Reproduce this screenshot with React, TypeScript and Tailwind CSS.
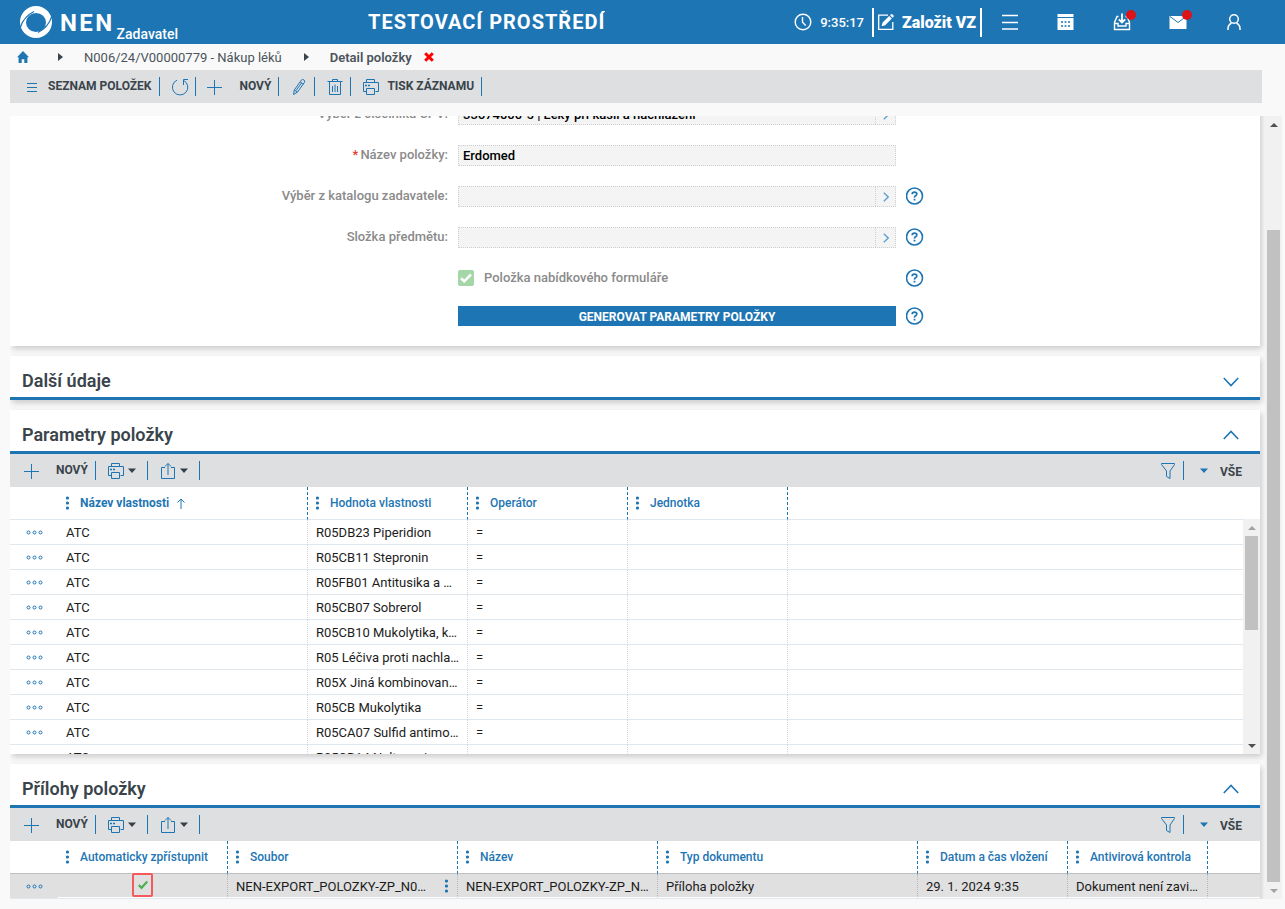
import React, { ReactNode } from "react";

type IconProps = { className?: string };

const stroke = {
  fill: "none",
  stroke: "currentColor",
  strokeWidth: 1,
} as const;

function LogoMark() {
  return (
    <svg viewBox="0 0 32 32" className="size-8 shrink-0" aria-hidden="true">
      <path d="M16 0a16 16 0 1 1 0 32a16 16 0 1 1 0-32zM16 7a10 9.500 0 1 0 0 19a10 9.500 0 1 0 0-19z" fill="#fff" fillRule="evenodd" />
      <path d="M0 22.500Q3 11 14 5.500" fill="none" stroke="#1e75b4" strokeWidth="1.200" />
      <path d="M32 9.500Q29 21 18 26.500" fill="none" stroke="#1e75b4" strokeWidth="1.200" />
    </svg>
  );
}

function ClockIcon() {
  return (
    <svg viewBox="0 0 18 18" className="size-[18px] shrink-0" {...stroke} strokeWidth={1.4} aria-hidden="true">
      <circle cx="9" cy="9" r="7.8" />
      <path d="M8.5 4v5.3l3.2 3.2" />
    </svg>
  );
}

function EditBoxIcon() {
  return (
    <svg viewBox="0 0 18 18" className="size-[18px] shrink-0" aria-hidden="true">
      <path d="M11 2.2H1.7v14.1h14.1V9" fill="none" stroke="currentColor" strokeWidth="1.3" />
      <path d="M4.6 13.2l1-3.6 6.6-6.6 2.6 2.6-6.6 6.6zM13 2.2l1-1q.6-.5 1.2 0l1.400 1.400q.5.6 0 1.200l-1 1z" fill="currentColor" />
    </svg>
  );
}

function MenuIcon() {
  return (
    <svg viewBox="0 0 18 18" className="size-[18px]" {...stroke} strokeWidth={1.7} aria-hidden="true">
      <path d="M1 2.500h16M1 9.500h16M1 16h16" />
    </svg>
  );
}

function CalendarIcon() {
  return (
    <svg viewBox="0 0 18 18" className="size-[18px]" aria-hidden="true">
      <path d="M.5 1h16v3H.5zM.5 5h16v12H.5z" fill="currentColor" />
      <path d="M4 9h2M7.500 9h2M11 9h2M4 13h2M7.500 13h2M11 13h2" stroke="#1e75b4" strokeWidth="1.500" />
    </svg>
  );
}

function InboxIcon() {
  return (
    <svg viewBox="0 0 18 18" className="size-[18px]" {...stroke} strokeWidth={1.4} aria-hidden="true">
      <path d="M5.500 3.500H4L1.500 9.500v7h15v-7L14 3.500h-1.500M1.500 10.500h3.500v2.500h8v-2.500h3.500" />
      <path d="M9 .5v9M5.800 6.300L9 9.500l3.200-3.200" strokeWidth="1.800" />
    </svg>
  );
}

function MailIcon() {
  return (
    <svg viewBox="0 0 18 18" className="size-[18px]" aria-hidden="true">
      <path d="M.5 3h17v13H.5z" fill="currentColor" />
      <path d="M1 3.500l8 6 8-6" fill="none" stroke="#1e75b4" strokeWidth="1" />
    </svg>
  );
}

function UserIcon() {
  return (
    <svg viewBox="0 0 18 18" className="size-[18px]" {...stroke} strokeWidth={1.500} aria-hidden="true">
      <circle cx="9" cy="6" r="4.300" />
      <path d="M3 17v-1.500q0-3.500 3.500-5.500M15 17v-1.500q0-3.500-3.500-5.500" />
    </svg>
  );
}

function HomeIcon() {
  return (
    <svg viewBox="0 0 12 12" className="size-3" aria-hidden="true">
      <path d="M6 0l6 6.200h-1.600V12H7.300V8.300H4.700V12H1.600V6.200H0z" fill="#1e75b4" />
    </svg>
  );
}

function CrossIcon() {
  return (
    <svg viewBox="0 0 10 10" className="size-[10px]" aria-hidden="true">
      <path d="M1.200 1.200l7.600 7.600M8.800 1.200L1.200 8.800" stroke="#f00" strokeWidth="3" />
    </svg>
  );
}

function ListIcon() {
  return (
    <svg viewBox="0 0 12 12" className="size-3" {...stroke} aria-hidden="true">
      <path d="M1 2.500h10M1 6.500h10M1 10.500h10" />
    </svg>
  );
}

function RefreshIcon() {
  return (
    <svg viewBox="0 0 18 18" className="size-[18px]" {...stroke} aria-hidden="true">
      <path d="M6 2.200A7.700 7.700 0 1 0 12.800 2.500M12.500 7V1.500H17" />
    </svg>
  );
}

function PlusIcon() {
  return (
    <svg viewBox="0 0 16 16" className="size-4" {...stroke} aria-hidden="true">
      <path d="M8.500 1v15M1 8.500h15" />
    </svg>
  );
}

function PencilIcon() {
  return (
    <svg viewBox="0 0 16 18" className="h-[18px] w-4" {...stroke} aria-hidden="true">
      <path d="M2.500 16.500l.8-4.500 7-9.800q1-1.300 2.500-.4 1.500 1.200.6 2.700l-7 9.700zM3.300 12l3.100 2.200M9.300 4l3 2.200M5 12.500L10.800 4.700" />
    </svg>
  );
}

function TrashIcon() {
  return (
    <svg viewBox="0 0 16 18" className="h-[18px] w-4" {...stroke} aria-hidden="true">
      <path d="M.5 3.500h15M5.500 3.500v-2h5v2M2.500 3.500v13h11v-13M5.500 8v6M8 6.500V14M10.500 8v6" />
    </svg>
  );
}

function PrinterIcon() {
  return (
    <svg viewBox="0 0 18 18" className="size-[18px]" {...stroke} aria-hidden="true">
      <path d="M4.500 4.500v-3h8v3M4.500 13.500h-3v-9h15v9h-3M4.500 10.500h8v6h-8z" />
      <path d="M3 7.500h2M6 7.500h2" strokeWidth="1.600" />
    </svg>
  );
}

function ShareIcon() {
  return (
    <svg viewBox="0 0 16 18" className="h-[18px] w-4" {...stroke} aria-hidden="true">
      <path d="M5 5.500H1.500v11h13v-11H11M8 13V1.500M5 4.500l3-3 3 3" />
    </svg>
  );
}

function FilterIcon() {
  return (
    <svg viewBox="0 0 16 18" className="h-[18px] w-4" {...stroke} aria-hidden="true">
      <path d="M1.500 1.500h13v1L10 9v7.500L6.500 14.500V9l-5-6.500z" />
    </svg>
  );
}

function CaretIcon({ className }: IconProps) {
  return (
    <svg viewBox="0 0 8 5" className={className ?? "h-[5px] w-2 text-[#343f47]"} aria-hidden="true">
      <path d="M0 .5h8L4 5z" fill="currentColor" />
    </svg>
  );
}

function CrumbArrow() {
  return (
    <svg viewBox="0 0 5 8" className="h-2 w-[5px] text-[#3a444b]" aria-hidden="true">
      <path d="M0 0v8l5-4z" fill="currentColor" />
    </svg>
  );
}

function ChevronIcon({ up }: { up?: boolean }) {
  return (
    <svg viewBox="0 0 16 12" className="h-3 w-4" {...stroke} strokeWidth={1.600} aria-hidden="true">
      <path d={up ? "M.8 10L8 2.500 15.200 10" : "M.8 3L8 10.500 15.200 3"} />
    </svg>
  );
}

function DotsVertical() {
  return (
    <svg viewBox="0 0 4 14" className="h-[14px] w-1 shrink-0" fill="#1e75b4" aria-hidden="true">
      <circle cx="1.500" cy="2" r="1.600" />
      <circle cx="1.500" cy="7" r="1.600" />
      <circle cx="1.500" cy="12" r="1.600" />
    </svg>
  );
}

function RowMenu() {
  return (
    <button type="button" aria-label="Akce řádku" className="ml-4 flex h-[23px] items-center text-[#1e75b4]">
      <svg viewBox="0 0 18 5" className="h-[5px] w-[18px]" {...stroke} aria-hidden="true">
        <circle cx="2.500" cy="2.500" r="1.500" />
        <circle cx="8.500" cy="2.500" r="1.500" />
        <circle cx="14.500" cy="2.500" r="1.500" />
      </svg>
    </button>
  );
}

function HelpButton({ topic }: { topic: string }) {
  return (
    <button type="button" aria-label={`Nápověda: ${topic}`} className="size-[18px] text-[#1e75b4]">
      <svg viewBox="0 0 18 18" className="size-[18px]" fill="none" stroke="currentColor" aria-hidden="true">
        <circle cx="8.500" cy="9" r="8" strokeWidth="1.600" />
        <path d="M6.200 7.200q0-2 2.300-2t2.300 1.800q0 1.200-1.200 1.700T8.500 10.600" strokeWidth="1.700" />
        <path d="M8.500 11.800v1.700" strokeWidth="1.800" />
      </svg>
    </button>
  );
}

function Separator() {
  return <span className="h-[19px] w-px shrink-0 bg-[#1e75b4]" />;
}

function Header() {
  const icons: { label: string; icon: ReactNode; badge?: boolean }[] = [
    { label: "Menu", icon: <MenuIcon /> },
    { label: "Kalendář", icon: <CalendarIcon /> },
    { label: "Úkoly", icon: <InboxIcon />, badge: true },
    { label: "Zprávy", icon: <MailIcon />, badge: true },
    { label: "Uživatel", icon: <UserIcon /> },
  ];
  return (
    <header className="flex h-11 shrink-0 items-center bg-[#1e75b4] pl-5 text-white">
      <div className="flex w-[348px] items-center">
        <LogoMark />
        <span className="mr-0.5 ml-2 pt-0.5 text-2xl leading-8 font-bold tracking-widest">NEN</span>
        <span className="self-end text-sm leading-[10px] font-medium">Zadavatel</span>
      </div>
      <h1 className="text-xl font-bold tracking-wider">TESTOVACÍ PROSTŘEDÍ</h1>
      <div className="ml-auto flex items-center">
        <ClockIcon />
        <span className="mr-2 ml-2 pt-0.5 text-[13px] font-medium">9:35:17</span>
        <button type="button" className="flex h-[29px] w-[110px] items-center gap-[7px] border-x-2 border-white pl-[3px] text-base font-black whitespace-nowrap">
          <EditBoxIcon />
          <span className="pt-0.5">Založit VZ</span>
        </button>
        <nav className="flex">
          {icons.map((i) => (
            <button key={i.label} type="button" aria-label={i.label} className="relative flex h-11 w-14 items-center justify-center">
              {i.icon}
              {i.badge && <span className="absolute top-2.5 right-3.5 size-2.5 rounded-full bg-[#dc1418]" />}
            </button>
          ))}
        </nav>
        <span className="w-[23px]" />
      </div>
    </header>
  );
}

function Breadcrumb() {
  return (
    <nav aria-label="Drobečková navigace" className="flex h-[26px] shrink-0 items-center pl-[17px] text-[13px] text-[#4b545b]">
      <a href="#home" aria-label="Domů">
        <HomeIcon />
      </a>
      <span className="ml-[29px]">
        <CrumbArrow />
      </span>
      <a href="#zakazka" className="mr-[22px] ml-[21px] pt-0.5">
        N006/24/V00000779 - Nákup léků
      </a>
      <CrumbArrow />
      <span className="ml-[21px] pt-0.5 font-semibold">Detail položky</span>
      <button type="button" aria-label="Zavřít" className="ml-3">
        <CrossIcon />
      </button>
    </nav>
  );
}

function Toolbar() {
  const button = "flex items-center whitespace-nowrap text-[#1e75b4]";
  const label = "pb-0.5 text-xs font-bold text-[#3a444b]";
  return (
    <div role="toolbar" className="mr-[23px] ml-2.5 flex h-[33px] shrink-0 items-center bg-[#dedfe1] pl-4">
      <button type="button" className={`${button} mr-2 gap-2.5`}>
        <ListIcon />
        <span className={label}>SEZNAM POLOŽEK</span>
      </button>
      <Separator />
      <button type="button" aria-label="Obnovit" className={`${button} mr-1.5 ml-[11px]`}>
        <RefreshIcon />
      </button>
      <Separator />
      <button type="button" className={`${button} mr-[7px] ml-2.5 gap-[17px]`}>
        <PlusIcon />
        <span className={label}>NOVÝ</span>
      </button>
      <Separator />
      <button type="button" aria-label="Upravit" className={`${button} mr-[7px] ml-3`}>
        <PencilIcon />
      </button>
      <Separator />
      <button type="button" aria-label="Smazat" className={`${button} mr-[7px] ml-3`}>
        <TrashIcon />
      </button>
      <Separator />
      <button type="button" className={`${button} mr-[7px] ml-[11px] gap-[7px]`}>
        <PrinterIcon />
        <span className={label}>TISK ZÁZNAMU</span>
      </button>
      <Separator />
    </div>
  );
}

const formGrid = "grid grid-cols-[minmax(0,73fr)_minmax(0,73fr)_minmax(0,59fr)] items-center gap-x-2.5";

function FormRow({ id, label, value, required, lookup, help }: { id: string; label: string; value?: string; required?: boolean; lookup?: boolean; help?: boolean }) {
  return (
    <div className={`${formGrid} mb-5 h-[21px]`}>
      <label htmlFor={id} className="pb-0.5 text-right font-medium text-[#8a8a8a]">
        {required && <span className="mr-0.5 text-[#e53935]">*</span>}
        {label}:
      </label>
      <div className="flex h-[21px] border border-dotted border-[#cfcfcf] bg-[#f4f4f4]">
        <input id={id} type="text" readOnly defaultValue={value} className="min-w-0 flex-1 bg-transparent px-1 font-medium text-black outline-none" />
        {lookup && (
          <button type="button" aria-label={`Vybrat: ${label}`} className="flex w-5 items-center justify-center border-l border-dotted border-[#cfcfcf] text-[#5b9fd0]">
            <svg viewBox="0 0 6 10" className="h-[10px] w-[6px]" {...stroke} strokeWidth={1.300} aria-hidden="true">
              <path d="M.8 .8L5.200 5 .8 9.200" />
            </svg>
          </button>
        )}
      </div>
      {help && (
        <div className="flex pb-0.5">
          <HelpButton topic={label} />
        </div>
      )}
    </div>
  );
}

const card = "mb-2.5 mr-[5px] bg-white shadow-[2px_3px_6px_rgba(0,0,0,0.18)]";

function DetailForm() {
  return (
    <section className={`${card} -mt-3 pb-5 text-[13px]`}>
      <FormRow id="cpv" label="Výběr z číselníku CPV" value="33674000-5 | Léky při kašli a nachlazení" lookup />
      <FormRow id="nazev" label="Název položky" value="Erdomed" required />
      <FormRow id="katalog" label="Výběr z katalogu zadavatele" lookup help />
      <FormRow id="slozka" label="Složka předmětu" lookup help />
      <div className={`${formGrid} mb-5 h-[18px]`}>
        <span />
        <label className="flex items-center gap-2.5 font-medium text-[#8a8a8a]">
          <span className="grid size-4 place-items-center">
            <input type="checkbox" defaultChecked className="col-start-1 row-start-1 size-4 appearance-none rounded-xs bg-[#a5d6a7]" />
            <svg viewBox="0 0 16 16" className="pointer-events-none col-start-1 row-start-1 size-4" fill="none" stroke="#fff" strokeWidth="2.600" aria-hidden="true">
              <path d="M3 8.200l3.200 3.100L13 4.500" />
            </svg>
          </span>
          Položka nabídkového formuláře
        </label>
        <HelpButton topic="Položka nabídkového formuláře" />
      </div>
      <div className={`${formGrid} h-5`}>
        <span />
        <button type="button" className="h-5 bg-[#1e75b4] pt-px text-xs font-bold text-white">
          GENEROVAT PARAMETRY POLOŽKY
        </button>
        <HelpButton topic="Generovat parametry položky" />
      </div>
    </section>
  );
}

function SectionTitle({ title, open }: { title: string; open?: boolean }) {
  return (
    <div className="flex h-11 items-center justify-between border-b-3 border-[#1e75b4] pt-2 pr-[21px] pl-3">
      <h2 className="text-lg font-semibold text-[#3a444b]">{title}</h2>
      <button type="button" aria-label={`${open ? "Sbalit" : "Rozbalit"}: ${title}`} className="text-[#1e75b4]">
        <ChevronIcon up={open} />
      </button>
    </div>
  );
}

function GridToolbar() {
  return (
    <div role="toolbar" className="flex h-[33px] items-center bg-[#dedfe1] pl-[13px] text-xs font-bold text-[#3a444b]">
      <button type="button" className="mr-[7px] flex items-center gap-[17px]">
        <span className="text-[#1e75b4]">
          <PlusIcon />
        </span>
        <span className="pb-0.5">NOVÝ</span>
      </button>
      <Separator />
      <button type="button" aria-label="Tisk" className="mr-[11px] ml-[11px] flex items-center gap-[3px] text-[#1e75b4]">
        <PrinterIcon />
        <CaretIcon />
      </button>
      <Separator />
      <button type="button" aria-label="Export" className="mr-[11px] ml-3 flex items-center gap-1 text-[#1e75b4]">
        <ShareIcon />
        <CaretIcon />
      </button>
      <Separator />
      <button type="button" aria-label="Filtr" className="mr-[7px] ml-auto text-[#1e75b4]">
        <FilterIcon />
      </button>
      <Separator />
      <button type="button" className="mr-[18px] ml-4 flex items-center gap-3">
        <CaretIcon className="h-[5px] w-2 text-[#1e75b4]" />
        <span className="pt-0.5">VŠE</span>
      </button>
    </div>
  );
}

function HeadCell({ children }: { children: ReactNode }) {
  return (
    <th scope="col" className="border-r border-b border-r-[#1e75b4] border-b-[#e0e8ed] p-0 text-left [border-right-style:dashed]">
      <div className="flex h-8 items-center gap-2.5 pl-2 text-xs font-medium text-[#1e75b4]">
        <DotsVertical />
        {children}
      </div>
    </th>
  );
}

function CellText({ children }: { children: ReactNode }) {
  return <div className="truncate pt-0.5 pr-1 pl-2">{children}</div>;
}

function ScrollArrow({ down, muted }: { down?: boolean; muted?: boolean }) {
  return (
    <span className={`flex h-[17px] shrink-0 items-center justify-center ${muted ? "text-[#a3a3a3]" : "text-[#505050]"}`}>
      <svg viewBox="0 0 8 4" className="h-1 w-2" aria-hidden="true">
        <path d={down ? "M0 0h8L4 4z" : "M0 4h8L4 0z"} fill="currentColor" />
      </svg>
    </span>
  );
}

const parameters = [
  "R05DB23 Piperidion",
  "R05CB11 Stepronin",
  "R05FB01 Antitusika a mukolytika",
  "R05CB07 Sobrerol",
  "R05CB10 Mukolytika, kombinace",
  "R05 Léčiva proti nachlazení",
  "R05X Jiná kombinovaná léčiva",
  "R05CB Mukolytika",
  "R05CA07 Sulfid antimonitý",
  "R05CB14 Neltenexin",
];

function ParametersSection() {
  const cell = "border-r border-b border-r-[#d4d4d4] border-b-[#e0e8ed] p-0 [border-right-style:dotted]";
  return (
    <section className={card}>
      <SectionTitle title="Parametry položky" open />
      <GridToolbar />
      <div className="flex h-[267px] overflow-hidden">
        <div className="min-w-0 flex-1">
          <table className="w-full table-fixed border-separate border-spacing-0 text-[13px] text-[#1c1c1c]">
            <colgroup>
              <col className="w-12" />
              <col className="w-[250px]" />
              <col className="w-40" />
              <col className="w-40" />
              <col className="w-40" />
              <col />
            </colgroup>
            <thead>
              <tr>
                <th className="border-b border-[#e0e8ed] p-0" />
                <HeadCell>
                  <span className="flex items-center gap-2 font-bold">
                    Název vlastnosti
                    <svg viewBox="0 0 8 11" className="h-[11px] w-2" {...stroke} aria-hidden="true">
                      <path d="M4 11V1M.5 4.500L4 1l3.500 3.500" />
                    </svg>
                  </span>
                </HeadCell>
                <HeadCell>Hodnota vlastnosti</HeadCell>
                <HeadCell>Operátor</HeadCell>
                <HeadCell>Jednotka</HeadCell>
                <th className="border-b border-[#e0e8ed] p-0" />
              </tr>
            </thead>
            <tbody>
              {parameters.map((p) => (
                <tr key={p} className="h-[25px]">
                  <td className="border-b border-[#e0e8ed] p-0">
                    <RowMenu />
                  </td>
                  <td className={cell}>
                    <CellText>ATC</CellText>
                  </td>
                  <td className={cell}>
                    <div className="pr-1">
                      <CellText>{p}</CellText>
                    </div>
                  </td>
                  <td className={cell}>
                    <CellText>=</CellText>
                  </td>
                  <td className={cell} />
                  <td className="border-b border-[#e0e8ed] p-0" />
                </tr>
              ))}
            </tbody>
          </table>
        </div>
        <div className="flex w-[17px] flex-col pt-8">
          <div className="flex flex-1 flex-col bg-[#f1f1f1]">
            <ScrollArrow muted />
            <div className="flex-1 px-0.5">
              <div className="h-[47%] bg-[#c1c1c1]" />
            </div>
            <ScrollArrow down />
          </div>
        </div>
      </div>
    </section>
  );
}

function AttachmentsSection() {
  const cell = "border-r border-b border-r-[#b8b8b8] border-b-white p-0 [border-right-style:dotted]";
  return (
    <section className="mr-[5px] bg-white shadow-[2px_3px_6px_rgba(0,0,0,0.18)]">
      <SectionTitle title="Přílohy položky" open />
      <GridToolbar />
      <table className="w-full table-fixed border-separate border-spacing-0 border-b border-[#e0e8ed] text-[13px] text-[#1c1c1c]">
        <colgroup>
          <col className="w-12" />
          <col className="w-[170px]" />
          <col className="w-[230px]" />
          <col className="w-[200px]" />
          <col className="w-[260px]" />
          <col className="w-[150px]" />
          <col className="w-[140px]" />
          <col />
        </colgroup>
        <thead className="[&_th]:border-b-[#c0c0c0]">
          <tr>
            <th className="border-b p-0" />
            <HeadCell>Automaticky zpřístupnit</HeadCell>
            <HeadCell>Soubor</HeadCell>
            <HeadCell>Název</HeadCell>
            <HeadCell>Typ dokumentu</HeadCell>
            <HeadCell>Datum a čas vložení</HeadCell>
            <HeadCell>Antivirová kontrola</HeadCell>
            <th className="border-b p-0" />
          </tr>
        </thead>
        <tbody>
          <tr className="h-6 bg-[#e0e0e0]">
            <td className="p-0">
              <RowMenu />
            </td>
            <td className={cell}>
              <div className="flex justify-center">
                <span className="-mt-px grid h-6 w-[21px] place-items-center rounded-xs border-2 border-[#f4595b]">
                  <svg viewBox="0 0 10 10" className="size-[10px]" fill="none" stroke="#4caf50" strokeWidth="2.200" role="img" aria-label="Ano">
                    <path d="M.8 5l2.700 2.800L9.300 1.500" />
                  </svg>
                </span>
              </div>
            </td>
            <td className={cell}>
              <div className="flex items-center justify-between pr-2">
                <div className="w-[206px]">
                  <CellText>NEN-EXPORT_POLOZKY-ZP_N006.xlsx</CellText>
                </div>
                <button type="button" aria-label="Akce souboru">
                  <DotsVertical />
                </button>
              </div>
            </td>
            <td className={cell}>
              <div className="pr-1">
                <CellText>NEN-EXPORT_POLOZKY-ZP_N006</CellText>
              </div>
            </td>
            <td className={cell}>
              <CellText>Příloha položky</CellText>
            </td>
            <td className={cell}>
              <CellText>29. 1. 2024 9:35</CellText>
            </td>
            <td className={cell}>
              <div className="pr-1">
                <CellText>Dokument není zavirovaný</CellText>
              </div>
            </td>
            <td className="border-b border-white p-0" />
          </tr>
        </tbody>
      </table>
    </section>
  );
}

export default function App() {
  return (
    <div className="flex h-screen flex-col bg-[#f9f9f9] font-['Roboto',sans-serif]">
      <Header />
      <Breadcrumb />
      <Toolbar />
      <div className="mt-[13px] mr-[3px] mb-2.5 ml-2.5 flex min-h-0 flex-1">
        <main className="min-w-0 flex-1 overflow-hidden">
          <DetailForm />
          <section className={card}>
            <SectionTitle title="Další údaje" />
          </section>
          <ParametersSection />
          <AttachmentsSection />
        </main>
        <div className="flex w-[17px] flex-col bg-[#f1f1f1]">
          <ScrollArrow />
          <div className="flex flex-1 flex-col justify-end px-0.5">
            <div className="h-[87%] bg-[#c1c1c1]" />
          </div>
          <ScrollArrow down muted />
        </div>
      </div>
    </div>
  );
}
